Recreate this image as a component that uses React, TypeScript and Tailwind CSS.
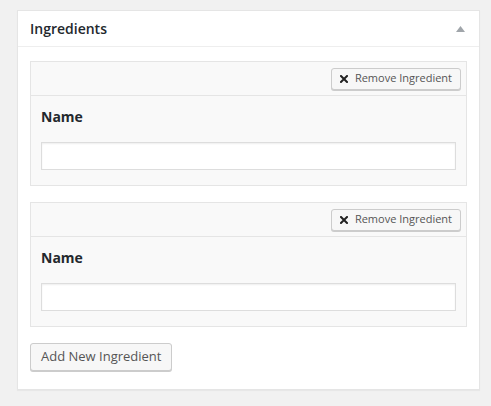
import React from 'react';

const font = { fontFamily: '"Open Sans", "Noto Sans", sans-serif' };

const RemoveButton: React.FC = () => (
  <button className="flex h-[22px] items-center gap-[7px] rounded-[3px] border border-[#cccccc] bg-[#f7f7f7] pl-[8px] pr-[8px] text-[11px] text-[#555555] shadow-[0_1px_0_#cccccc]">
    <svg width="8" height="8" viewBox="0 0 8 8">
      <path d="M1 1L7 7M7 1L1 7" stroke="#222" strokeWidth="2" strokeLinecap="square" />
    </svg>
    <span>Remove Ingredient</span>
  </button>
);

const IngredientBox: React.FC = () => (
  <div className="border border-[#e5e5e5] bg-[#f9f9f9]">
    <div className="flex h-[34px] items-center justify-end border-b border-[#e5e5e5] pr-[5px]">
      <RemoveButton />
    </div>
    <div className="px-[10px] pb-[15px] pt-[11px]">
      <div className="text-[14px] font-bold leading-[20px] text-[#23282d]">Name</div>
      <input
        type="text"
        className="mt-[15px] block h-[28px] w-full border border-[#dddddd] bg-white shadow-[inset_0_1px_2px_rgba(0,0,0,0.07)] outline-none"
      />
    </div>
  </div>
);

const App: React.FC = () => {
  return (
    <div className="min-h-[406px] bg-[#f1f1f1] pl-[17px] pr-[11px] pt-[10px]" style={font}>
      <div className="border border-[#e5e5e5] bg-white shadow-[0_1px_1px_rgba(0,0,0,0.04)]">
        <div className="flex h-[36px] items-center justify-between border-b border-[#eeeeee] pl-[12px] pr-[14px]">
          <h2 className="text-[14px] font-semibold leading-[20px] text-[#23282d]">Ingredients</h2>
          <svg width="9" height="6" viewBox="0 0 9 6">
            <path d="M4.5 0L9 6H0z" fill="#a0a5aa" />
          </svg>
        </div>
        <div className="px-[12px] pb-[18px] pt-[14px]">
          <div className="flex flex-col gap-[16px]">
            <IngredientBox />
            <IngredientBox />
          </div>
          <button className="mt-[16px] h-[28px] rounded-[3px] border border-[#cccccc] bg-[#f7f7f7] px-[10px] text-[13px] text-[#555555] shadow-[0_1px_0_#cccccc]">
            Add New Ingredient
          </button>
        </div>
      </div>
    </div>
  );
};

export default App;
